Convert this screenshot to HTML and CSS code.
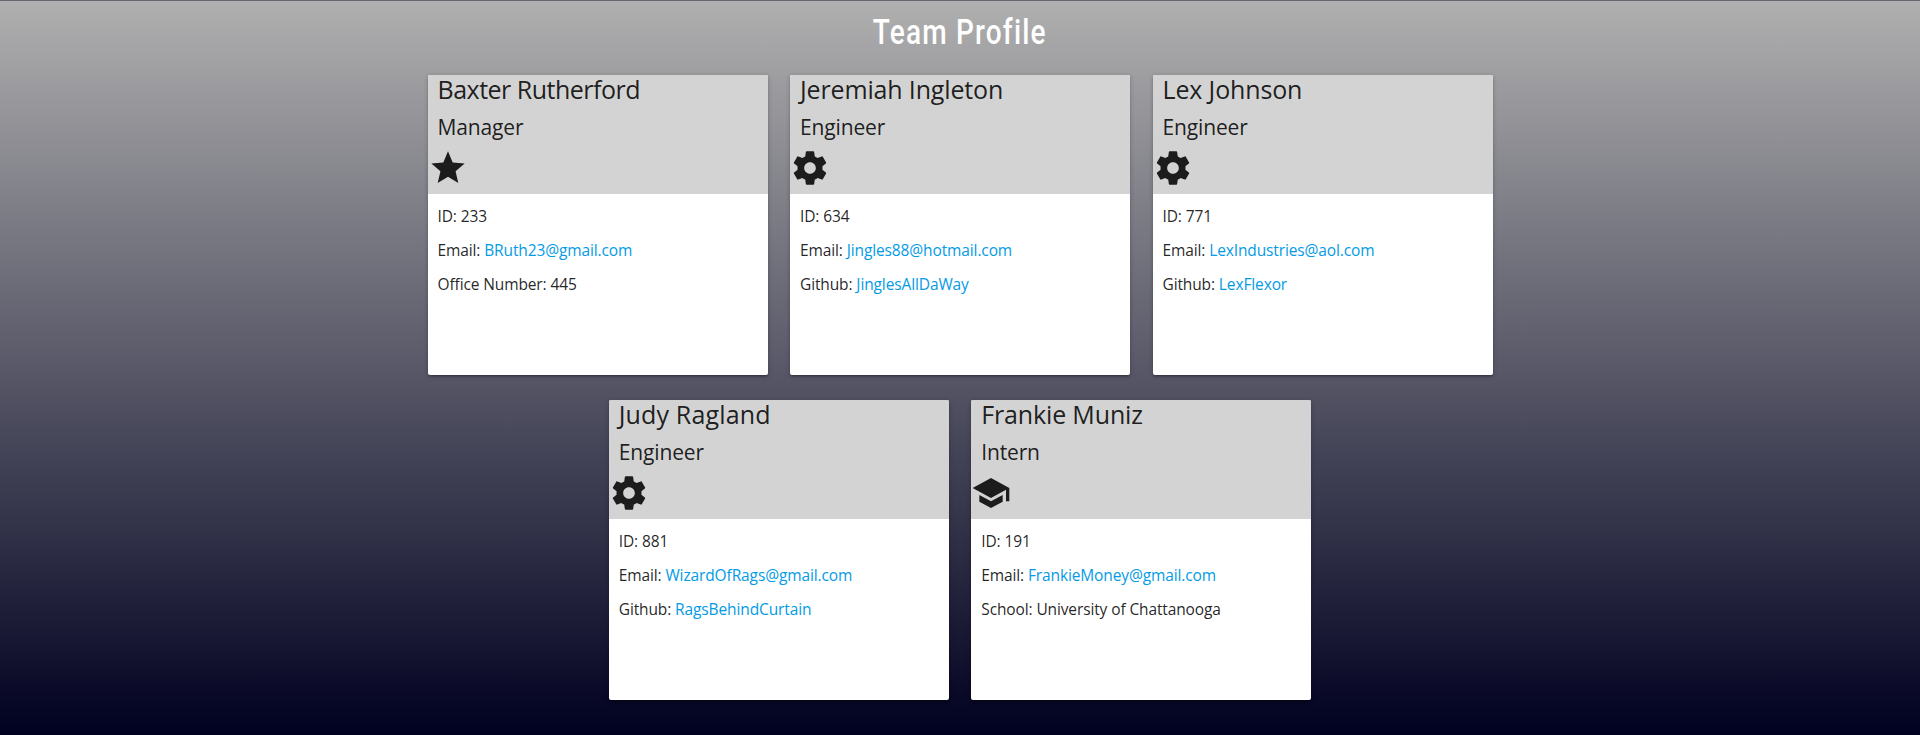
FILE: index.html
```html
<!DOCTYPE html>
<html lang="en">
<head>
<meta charset="utf-8">
<title>Team Profile</title>
<link rel="stylesheet" href="styles.css">
</head>
<body>
<svg class="sprite" aria-hidden="true">
  <symbol id="star" viewBox="0 0 24 24"><path d="M12 17.27 18.18 21l-1.64-7.03L22 9.24l-7.19-.61L12 2 9.19 8.63 2 9.24l5.46 4.73L5.82 21z"/></symbol>
  <symbol id="gear" viewBox="0 0 24 24"><path d="M19.43 12.98c.04-.32.07-.64.07-.98s-.03-.66-.07-.98l2.11-1.65c.19-.15.24-.42.12-.64l-2-3.46c-.12-.22-.39-.3-.61-.22l-2.49 1c-.52-.4-1.08-.73-1.69-.98l-.38-2.65C14.46 2.18 14.25 2 14 2h-4c-.25 0-.46.18-.49.42l-.38 2.65c-.61.25-1.17.59-1.69.98l-2.49-1c-.23-.09-.49 0-.61.22l-2 3.46c-.13.22-.07.49.12.64l2.11 1.65c-.04.32-.07.65-.07.98s.03.66.07.98l-2.11 1.65c-.19.15-.24.42-.12.64l2 3.46c.12.22.39.3.61.22l2.49-1c.52.4 1.08.73 1.69.98l.38 2.65c.03.24.24.42.49.42h4c.25 0 .46-.18.49-.42l.38-2.65c.61-.25 1.17-.59 1.69-.98l2.49 1c.23.09.49 0 .61-.22l2-3.46c.12-.22.07-.49-.12-.64l-2.11-1.65zM12 15.5c-1.93 0-3.5-1.57-3.5-3.5s1.57-3.5 3.5-3.5 3.5 1.57 3.5 3.5-1.57 3.5-3.5 3.5z"/></symbol>
  <symbol id="school" viewBox="0 0 24 24"><path d="M5 13.18v4L12 21l7-3.82v-4L12 17l-7-3.82zM12 3 1 9l11 6 9-4.91V17h2V9L12 3z"/></symbol>
</svg>
<h1 class="title"><span class="title-text">Team Profile</span></h1>
<main class="team">
  <div class="row">
    <article class="card">
      <header class="card-head"><h2 class="name name-tight">Baxter Rutherford</h2><h3 class="role">Manager</h3><svg class="icon"><use href="#star"/></svg></header>
      <div class="info"><p>ID: 233</p><p>Email: <a>BRuth23@gmail.com</a></p><p>Office Number: 445</p></div>
    </article>
    <article class="card">
      <header class="card-head"><h2 class="name">Jeremiah Ingleton</h2><h3 class="role">Engineer</h3><svg class="icon"><use href="#gear"/></svg></header>
      <div class="info"><p>ID: 634</p><p>Email: <a>Jingles88@hotmail.com</a></p><p>Github: <a>JinglesAllDaWay</a></p></div>
    </article>
    <article class="card">
      <header class="card-head"><h2 class="name">Lex Johnson</h2><h3 class="role">Engineer</h3><svg class="icon"><use href="#gear"/></svg></header>
      <div class="info"><p>ID: 771</p><p>Email: <a>LexIndustries@aol.com</a></p><p>Github: <a>LexFlexor</a></p></div>
    </article>
  </div>
  <div class="row">
    <article class="card">
      <header class="card-head"><h2 class="name name-wide">Judy Ragland</h2><h3 class="role">Engineer</h3><svg class="icon"><use href="#gear"/></svg></header>
      <div class="info"><p>ID: 881</p><p>Email: <a>WizardOfRags@gmail.com</a></p><p>Github: <a>RagsBehindCurtain</a></p></div>
    </article>
    <article class="card">
      <header class="card-head"><h2 class="name">Frankie Muniz</h2><h3 class="role">Intern</h3><svg class="icon"><use href="#school"/></svg></header>
      <div class="info"><p>ID: 191</p><p>Email: <a>FrankieMoney@gmail.com</a></p><p>School: University of Chattanooga</p></div>
    </article>
  </div>
</main>
</body>
</html>
```
FILE: styles.css
```css
* { box-sizing: border-box; }
html { height: 100%; }
body {
  margin: 0;
  height: 735px;
  overflow: hidden;
  border-top: 1px solid #66646c;
  background: linear-gradient(#b0b0b0, #000020) no-repeat;
  font-family: "Open Sans", "Noto Sans", sans-serif;
  color: rgba(0, 0, 0, 0.87);
}
h1, h2, h3, p { margin: 0; font-weight: 400; }
.sprite { display: none; }
.title {
  height: 74px;
  padding-top: 12px;
  text-align: center;
  color: #fff;
  font: 500 35px/40px Roboto, sans-serif;
}
.title-text { display: inline-block; letter-spacing: 1.5px; transform: scaleX(0.8); }
.team { display: flex; flex-direction: column; gap: 25px; }
.row { display: flex; justify-content: center; gap: 22.5px; }
.card {
  width: 340px;
  height: 300px;
  background: #fff;
  border-radius: 2px;
  box-shadow: 0 2px 2px 0 rgba(0,0,0,.14), 0 3px 1px -2px rgba(0,0,0,.12), 0 1px 5px 0 rgba(0,0,0,.2);
}
.card-head { height: 119px; background: lightgray; border-radius: 2px 2px 0 0; }
.name { padding-left: 10px; font-size: 25px; line-height: 29px; letter-spacing: -0.15px; }
.name-tight { letter-spacing: -0.5px; }
.name-wide { letter-spacing: 0.15px; }
.role { padding: 5px 0 0 10px; font-size: 21px; line-height: 36px; letter-spacing: -0.15px; }
.icon { display: block; width: 40px; height: 40px; margin-top: 3px; fill: currentColor; }
.info { padding: 11px 10px; font-size: 15.5px; line-height: 22px; letter-spacing: -0.12px; }
.info p { margin-bottom: 12px; }
.info a { color: #039be5; }
```
